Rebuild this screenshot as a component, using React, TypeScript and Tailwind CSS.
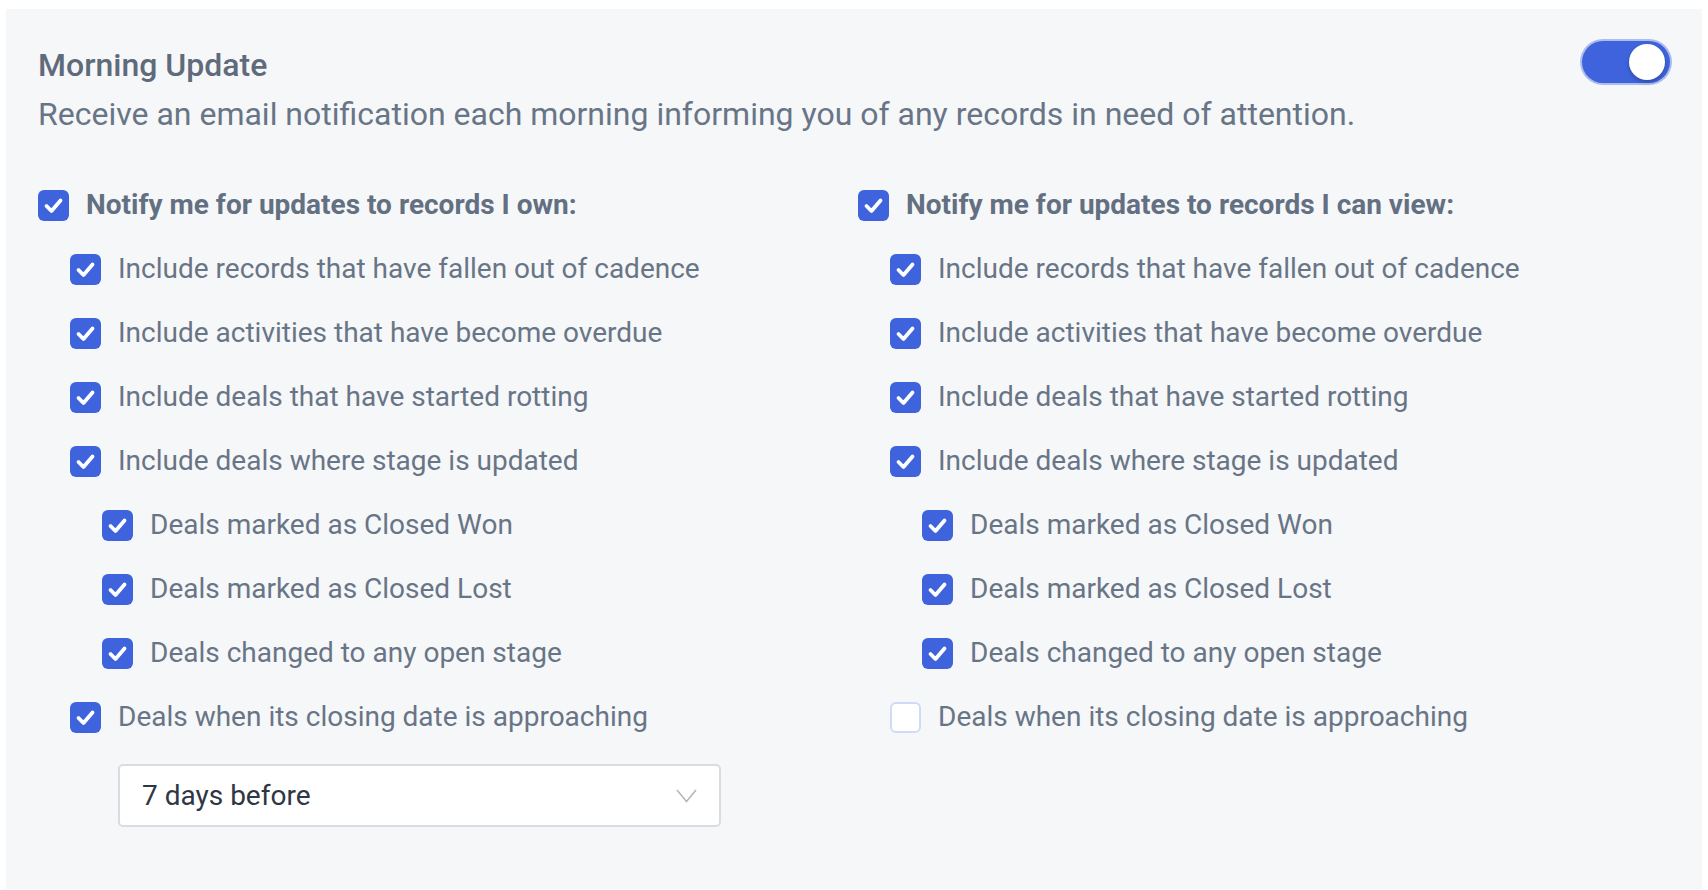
import React, { useState } from 'react';

const font = { fontFamily: 'Roboto, "Noto Sans", sans-serif' };

type Item = { label: string; level: number; checked: boolean; bold?: boolean };

const CheckBox = ({ checked }: { checked: boolean }) =>
  checked ? (
    <span className="flex h-[31px] w-[31px] shrink-0 items-center justify-center rounded-[6px] bg-[#3e63dd]">
      <svg width="31" height="31" viewBox="0 0 31 31" fill="none">
        <path d="M8.5 16 L13.5 21 L22.5 10.5" stroke="white" strokeWidth="3.8" strokeLinecap="round" strokeLinejoin="round" />
      </svg>
    </span>
  ) : (
    <span className="h-[31px] w-[31px] shrink-0 rounded-[6px] border-2 border-[#cfdaf6] bg-white" />
  );

const Row = ({ item }: { item: Item }) => (
  <div className="flex h-16 items-center" style={{ paddingLeft: item.level * 32 }}>
    <CheckBox checked={item.checked} />
    <span
      className={
        item.bold
          ? 'ml-[17px] whitespace-nowrap text-[28px] font-bold text-[#637081]'
          : 'ml-[17px] whitespace-nowrap text-[28px] text-[#687586]'
      }
    >
      {item.label}
    </span>
  </div>
);

const buildItems = (owner: string, closing: boolean): Item[] => [
  { label: `Notify me for updates to records I ${owner}:`, level: 0, checked: true, bold: true },
  { label: 'Include records that have fallen out of cadence', level: 1, checked: true },
  { label: 'Include activities that have become overdue', level: 1, checked: true },
  { label: 'Include deals that have started rotting', level: 1, checked: true },
  { label: 'Include deals where stage is updated', level: 1, checked: true },
  { label: 'Deals marked as Closed Won', level: 2, checked: true },
  { label: 'Deals marked as Closed Lost', level: 2, checked: true },
  { label: 'Deals changed to any open stage', level: 2, checked: true },
  { label: 'Deals when its closing date is approaching', level: 1, checked: closing },
];

const Toggle = () => {
  const [on, setOn] = useState(true);
  return (
    <button
      onClick={() => setOn(!on)}
      className="relative h-[42px] w-[88px] shrink-0 rounded-full bg-[#3e63dd] ring-2 ring-[#3e63dd]/40"
    >
      <span className="absolute right-[5px] top-[3px] h-[36px] w-[36px] rounded-full bg-white shadow-[0_2px_4px_rgba(0,0,0,0.25)]" />
    </button>
  );
};

export default function App() {
  const own = buildItems('own', true);
  const view = buildItems('can view', false);

  return (
    <div className="h-[890px] bg-white pb-[1px] pl-[6px] pr-[6px] pt-[9px]" style={font}>
      <div className="h-full bg-[#f6f7f9] px-8 pt-8">
        <div className="flex items-start justify-between">
          <div>
            <h2 className="mt-[4px] text-[32px] font-medium leading-[40px] text-[#5f6b7b]">Morning Update</h2>
            <p className="mt-[9px] text-[32px] leading-[40px] text-[#687586]">
              Receive an email notification each morning informing you of any records in need of attention.
            </p>
          </div>
          <Toggle />
        </div>

        <div className="mt-[39px] grid grid-cols-[820px_1fr]">
          <div>
            {own.map((item) => (
              <Row key={item.label} item={item} />
            ))}
            <div className="mt-[15px] pl-[80px]">
              <div className="flex h-[63px] w-[603px] items-center justify-between rounded-[5px] border-2 border-[#dadcdf] bg-white pl-[22px] pr-[22px]">
                <span className="text-[28px] text-[#2f3644]">7 days before</span>
                <svg width="21" height="14" viewBox="0 0 21 14" fill="none">
                  <path d="M1 1 L10.5 12.5 L20 1" stroke="#b3b7bd" strokeWidth="1.6" />
                </svg>
              </div>
            </div>
          </div>
          <div>
            {view.map((item) => (
              <Row key={item.label} item={item} />
            ))}
          </div>
        </div>
      </div>
    </div>
  );
}
